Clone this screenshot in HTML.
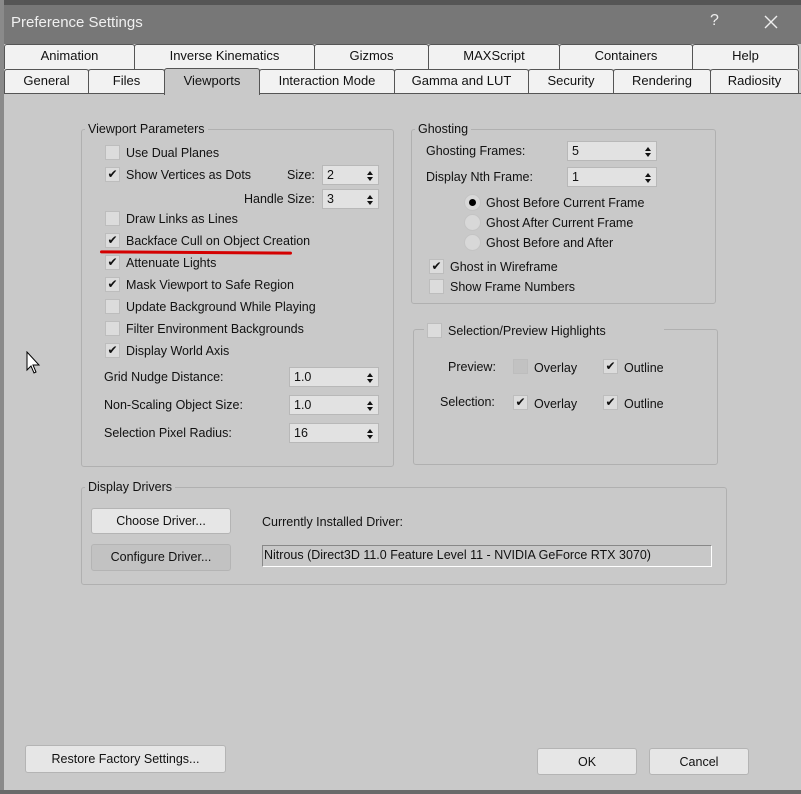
<!DOCTYPE html>
<html><head><meta charset="utf-8"><style>
*{box-sizing:border-box;margin:0;padding:0}
body{width:801px;height:794px;background:#c9c9c9;font-family:"Liberation Sans",sans-serif;font-size:12.5px;color:#111;position:relative;overflow:hidden}
.a{position:absolute}
.t{position:absolute;white-space:nowrap;line-height:16px}
.tab{position:absolute;background:#f2f2f2;border:1px solid #555;border-bottom:none;border-radius:3px 3px 0 0;text-align:center;font-size:13px;line-height:22px}
.cb{position:absolute;width:15px;height:15px;background:#dcdcdc;border:1px solid #bdbdbd;font-size:12px;line-height:13px;text-align:center}
.grp{position:absolute;border:1px solid #b0b0b0;border-radius:3px}
.lg{position:absolute;background:#c9c9c9;padding:0 3px;line-height:16px;white-space:nowrap}
.sp{position:absolute;height:20px;background:#e2e2e2;border:1px solid #b8b8b8;padding-left:4px;line-height:18px}
.sp:after{content:"";position:absolute;right:5px;top:5px;border:3px solid transparent;border-bottom:4px solid #111;border-top:none}
.sp:before{content:"";position:absolute;right:5px;top:11px;border:3px solid transparent;border-top:4px solid #111;border-bottom:none}
.rd{position:absolute;width:17px;height:17px;border-radius:50%;background:#d8d8d8;border:1px solid #c4c4c4}
.btn{position:absolute;background:#e6e6e6;border:1px solid #b4b4b4;border-radius:3px;text-align:center;font-size:12.5px}
</style></head><body>
<div class="a" style="left:0;top:0;width:801px;height:5px;background:#555"></div>
<div class="a" style="left:0;top:0;width:4px;height:794px;background:#8a8a8a"></div>
<div class="a" style="left:4px;top:5px;width:797px;height:39px;background:#777"></div>
<div class="t" style="left:11px;top:14px;font-size:15px;color:#f0f0f0;line-height:18px">Preference Settings</div>
<div class="t" style="left:710px;top:13px;font-size:16px;color:#eee">?</div>
<svg class="a" style="left:764px;top:15px" width="14" height="14"><path d="M1 1L13 13M13 1L1 13" stroke="#eee" stroke-width="1.4"/></svg>
<div class="a" style="left:4px;top:44px;width:797px;height:50px;background:#c9c9c9"></div>
<div class="tab" style="left:4px;top:44px;width:131px;height:25px">Animation</div>
<div class="tab" style="left:134px;top:44px;width:181px;height:25px">Inverse Kinematics</div>
<div class="tab" style="left:314px;top:44px;width:115px;height:25px">Gizmos</div>
<div class="tab" style="left:428px;top:44px;width:132px;height:25px">MAXScript</div>
<div class="tab" style="left:559px;top:44px;width:134px;height:25px">Containers</div>
<div class="tab" style="left:692px;top:44px;width:107px;height:25px">Help</div>
<div class="tab" style="left:4px;top:69px;width:85px;height:25px">General</div>
<div class="tab" style="left:88px;top:69px;width:77px;height:25px">Files</div>
<div class="tab" style="left:164px;top:68px;width:96px;height:27px;background:#c9c9c9;line-height:24px">Viewports</div>
<div class="tab" style="left:259px;top:69px;width:136px;height:25px">Interaction Mode</div>
<div class="tab" style="left:394px;top:69px;width:135px;height:25px">Gamma and LUT</div>
<div class="tab" style="left:528px;top:69px;width:86px;height:25px">Security</div>
<div class="tab" style="left:613px;top:69px;width:98px;height:25px">Rendering</div>
<div class="tab" style="left:710px;top:69px;width:89px;height:25px">Radiosity</div>
<div class="a" style="left:4px;top:93px;width:160px;height:1px;background:#555"></div>
<div class="a" style="left:259px;top:93px;width:542px;height:1px;background:#555"></div>

<div class="grp" style="left:81px;top:129px;width:313px;height:338px"></div>
<div class="lg" style="left:85px;top:121px">Viewport Parameters</div>
<div class="cb" style="left:105px;top:145px"></div><div class="t" style="left:126px;top:145px">Use Dual Planes</div>
<div class="cb" style="left:105px;top:167px">✔</div><div class="t" style="left:126px;top:167px">Show Vertices as Dots</div>
<div class="t" style="left:287px;top:167px">Size:</div><div class="sp" style="left:322px;top:165px;width:57px">2</div>
<div class="t" style="left:244px;top:191px">Handle Size:</div><div class="sp" style="left:322px;top:189px;width:57px">3</div>
<div class="cb" style="left:105px;top:211px"></div><div class="t" style="left:126px;top:211px">Draw Links as Lines</div>
<div class="cb" style="left:105px;top:233px">✔</div><div class="t" style="left:126px;top:233px">Backface Cull on Object Creation</div>
<div class="a" style="left:100px;top:251px;width:192px;height:3px;background:#d40000;border-radius:2px;transform:rotate(0.4deg)"></div>
<div class="cb" style="left:105px;top:255px">✔</div><div class="t" style="left:126px;top:255px">Attenuate Lights</div>
<div class="cb" style="left:105px;top:277px">✔</div><div class="t" style="left:126px;top:277px">Mask Viewport to Safe Region</div>
<div class="cb" style="left:105px;top:299px"></div><div class="t" style="left:126px;top:299px">Update Background While Playing</div>
<div class="cb" style="left:105px;top:321px"></div><div class="t" style="left:126px;top:321px">Filter Environment Backgrounds</div>
<div class="cb" style="left:105px;top:343px">✔</div><div class="t" style="left:126px;top:343px">Display World Axis</div>
<div class="t" style="left:104px;top:369px">Grid Nudge Distance:</div><div class="sp" style="left:289px;top:367px;width:90px">1.0</div>
<div class="t" style="left:104px;top:397px">Non-Scaling Object Size:</div><div class="sp" style="left:289px;top:395px;width:90px">1.0</div>
<div class="t" style="left:104px;top:425px">Selection Pixel Radius:</div><div class="sp" style="left:289px;top:423px;width:90px">16</div>

<div class="grp" style="left:411px;top:129px;width:305px;height:175px"></div>
<div class="lg" style="left:415px;top:121px">Ghosting</div>
<div class="t" style="left:426px;top:143px">Ghosting Frames:</div><div class="sp" style="left:567px;top:141px;width:90px">5</div>
<div class="t" style="left:426px;top:169px">Display Nth Frame:</div><div class="sp" style="left:567px;top:167px;width:90px">1</div>
<div class="rd" style="left:464px;top:194px"><div class="a" style="left:4px;top:4px;width:7px;height:7px;border-radius:50%;background:#000"></div></div>
<div class="t" style="left:486px;top:195px">Ghost Before Current Frame</div>
<div class="rd" style="left:464px;top:214px"></div><div class="t" style="left:486px;top:215px">Ghost After Current Frame</div>
<div class="rd" style="left:464px;top:234px"></div><div class="t" style="left:486px;top:235px">Ghost Before and After</div>
<div class="cb" style="left:429px;top:259px">✔</div><div class="t" style="left:450px;top:259px">Ghost in Wireframe</div>
<div class="cb" style="left:429px;top:279px"></div><div class="t" style="left:450px;top:279px">Show Frame Numbers</div>

<div class="grp" style="left:413px;top:329px;width:305px;height:136px"></div>
<div class="lg" style="left:424px;top:323px;width:240px;height:16px"></div>
<div class="cb" style="left:427px;top:323px"></div><div class="t" style="left:448px;top:323px">Selection/Preview Highlights</div>
<div class="t" style="left:448px;top:359px">Preview:</div>
<div class="cb" style="left:513px;top:359px;background:#c2c2c2"></div><div class="t" style="left:534px;top:360px">Overlay</div>
<div class="cb" style="left:603px;top:359px">✔</div><div class="t" style="left:624px;top:360px">Outline</div>
<div class="t" style="left:440px;top:394px">Selection:</div>
<div class="cb" style="left:513px;top:395px">✔</div><div class="t" style="left:534px;top:396px">Overlay</div>
<div class="cb" style="left:603px;top:395px">✔</div><div class="t" style="left:624px;top:396px">Outline</div>

<div class="grp" style="left:81px;top:487px;width:646px;height:98px"></div>
<div class="lg" style="left:85px;top:479px">Display Drivers</div>
<div class="btn" style="left:91px;top:508px;width:140px;height:26px;line-height:24px">Choose Driver...</div>
<div class="btn" style="left:91px;top:544px;width:140px;height:27px;line-height:25px;background:#c2c2c2">Configure Driver...</div>
<div class="t" style="left:262px;top:514px">Currently Installed Driver:</div>
<div class="a" style="left:262px;top:545px;width:450px;height:22px;background:#c8c8c8;border:1px solid #888;border-right-color:#fff;border-bottom-color:#fff;line-height:19px;padding-left:1px;white-space:nowrap">Nitrous (Direct3D 11.0 Feature Level 11 - NVIDIA GeForce RTX 3070)</div>

<div class="btn" style="left:25px;top:745px;width:201px;height:28px;line-height:26px">Restore Factory Settings...</div>
<div class="btn" style="left:537px;top:748px;width:100px;height:27px;line-height:26px">OK</div>
<div class="btn" style="left:649px;top:748px;width:100px;height:27px;line-height:26px">Cancel</div>

<svg class="a" style="left:26px;top:351px" width="16" height="24" viewBox="0 0 16 24"><path d="M1 1 L1 19 L5 15 L8 22 L10 21 L7 14 L13 14 Z" fill="#fff" stroke="#000" stroke-width="1"/></svg>
<div class="a" style="left:0;top:790px;width:801px;height:4px;background:#6a6a6a"></div>
</body></html>
